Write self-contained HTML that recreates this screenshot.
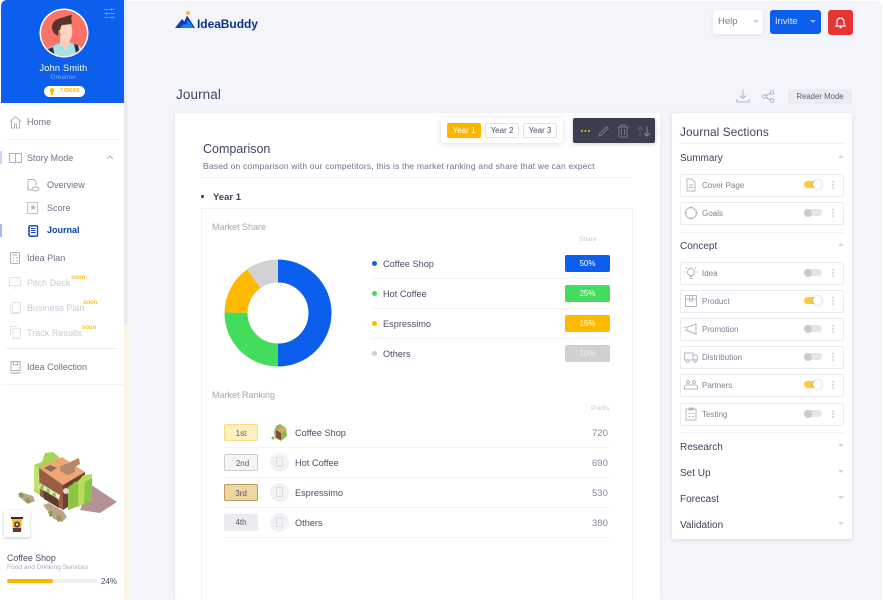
<!DOCTYPE html>
<html><head><meta charset="utf-8"><style>
html,body{margin:0;padding:0}
body{width:883px;height:600px;position:relative;overflow:hidden;background:#fff;font-family:"Liberation Sans",sans-serif;color:#3d4260}
.a{position:absolute}
.t{position:absolute;white-space:nowrap;line-height:1}
.nav{font-size:9px;color:#6c7189;letter-spacing:.03px}
.soon{font-size:6px;color:#ffc21a;font-weight:bold}
.dim{color:#c9ccd6}
.item{position:absolute;left:680px;width:162px;height:21px;border:1px solid #ebecf0;border-radius:2px;background:#fff}
.item span{position:absolute;left:21px;top:7px;font-size:8px;line-height:1;color:#7d8196;white-space:nowrap}
.tog{position:absolute;left:123px;top:6px;width:18px;height:7px;border-radius:4px;background:#e5e6ea}
.tog i{position:absolute;left:0;top:-.5px;width:8px;height:8px;border-radius:50%;background:#cbcbcb}
.tog.on{background:#ffc83d}
.tog.on i{left:9px;top:-1px;width:9px;height:9px;background:#fff;box-shadow:0 0 2px rgba(0,0,0,.3)}
.dots{position:absolute;left:151px;top:6px;width:2px;height:2px;background:#d0d2d9;border-radius:50%;box-shadow:0 3px 0 #d0d2d9,0 6px 0 #d0d2d9}
.ic{position:absolute;left:3px;top:3px}
.h{font-size:10px;color:#3d4260}
.hr{position:absolute;background:#eef0f4;height:1px}
.yr{position:absolute;top:123px;width:32px;height:13px;border:1px solid #e3e4e9;border-radius:2px;font-size:8px;line-height:13px;text-align:center;color:#4a4e66}
.bar{position:absolute;left:565px;width:45px;height:17px;border-radius:2px;color:#fff;font-size:8px;line-height:17px;text-align:center}
.dot{position:absolute;left:372px;width:5px;height:5px;border-radius:50%}
.rank{position:absolute;left:224px;width:32px;height:15px;border-radius:2px;font-size:8px;line-height:17px;text-align:center;color:#555a70;box-sizing:content-box}
.ph{position:absolute;left:270px;width:19px;height:19px;border-radius:50%;background:#f1f2f4}
.ph i{position:absolute;left:6px;top:4px;width:7px;height:10px;border:1px solid #dcdde2;box-sizing:border-box}
.row{font-size:9.200px;color:#4a4e68}
.pts{font-size:9.500px;color:#85889a}
</style></head><body>

<!-- main background -->
<div class="a" style="left:124px;top:1px;width:758px;height:599px;background:#f4f5fb;border-top-right-radius:6px"></div>
<div class="a" style="left:124px;top:325px;width:5px;height:275px;background:#fdf6e6"></div>
<div class="a" style="left:124px;top:0;width:3px;height:325px;background:#e9eaf0"></div>

<!-- sidebar -->
<div class="a" style="left:1px;top:0;width:123px;height:103px;background:#0b5fec;border-top-left-radius:6px"></div>
<div class="a" style="left:0;top:103px;width:124px;height:497px;background:#fff"></div>

<svg class="a" style="left:103px;top:8px" width="13" height="12" viewBox="0 0 13 12"><g stroke="#5e93f2" stroke-width="1" fill="none"><path d="M1 1.500h11M1 5.500h11M1 9.500h11"/><path d="M8.500 0v3M3.500 4v3M9 8v3"/></g></svg>

<!-- avatar -->
<svg class="a" style="left:39px;top:8px" width="50" height="50" viewBox="0 0 50 50">
<defs><clipPath id="cp"><circle cx="25" cy="25" r="23"/></clipPath></defs>
<circle cx="25" cy="25" r="24.500" fill="#fff"/><circle cx="25" cy="25" r="23" fill="#fa7268"/>
<g clip-path="url(#cp)">
<path d="M6 50l3-10 12-5h11l9 3 4 12z" fill="#a6e0ec"/>
<path d="M8 50l1-9 5-2 2 11zM35 36l4 1 3 13h-4z" fill="#2d3138"/>
<path d="M21 28v8l5 6 5-6v-6z" fill="#f7cdbb"/>
<path d="M20 18l12-2 1.500 8-1.500 7-5 2-4-3-2-6z" fill="#fbd6c4"/>
<path d="M13 19c0-5 4-8 9-9 4-1 8-3 11-3l-1 4c1 1 1 3 .5 5l-10 1-1.500 5-1.500 0-.5 6-3-2c-2-2-3-4-3-7z" fill="#57362a"/>
</g></svg>
<div class="t" style="left:0;width:127px;text-align:center;top:64px;font-size:9.200px;color:#fff;letter-spacing:.2px">John Smith</div>
<div class="t" style="left:0;width:127px;text-align:center;top:75px;font-size:6.500px;color:#7da9f5">Dreamer</div>
<div class="a" style="left:44px;top:86px;width:41px;height:10.500px;background:#fff;border-radius:6px"></div>
<div class="a" style="left:50px;top:88px;width:4px;height:5px;background:#ffbb00;border-radius:2px"></div>
<div class="a" style="left:51px;top:93px;width:2px;height:2px;background:#ffbb00"></div>
<div class="t" style="left:60px;top:88.500px;font-size:5px;font-weight:bold;color:#ffb400">7 IDEAS</div>

<!-- nav -->
<svg class="a" style="left:9px;top:115px" width="13" height="14" viewBox="0 0 13 14"><path d="M1 6.500L6.500 1.500 12 6.500M2.500 5.500V13h3V9h2v4h3V5.500" fill="none" stroke="#aeb2c0" stroke-width="1"/></svg>
<div class="t nav" style="left:27px;top:118px">Home</div>
<div class="hr" style="left:6px;top:139px;width:112px"></div>
<div class="a" style="left:0;top:151px;width:1.500px;height:13px;background:#c4d6f6"></div>
<svg class="a" style="left:9px;top:153px" width="13" height="11" viewBox="0 0 13 11"><path d="M.5.500h5.500l.5.500.5-.500h5.500v9H7l-.5.500-.5-.500H.5zM6.500 1v9" fill="none" stroke="#aeb2c0"/></svg>
<div class="t nav" style="left:27px;top:154px">Story Mode</div>
<svg class="a" style="left:106px;top:155px" width="8" height="5" viewBox="0 0 8 5"><path d="M1 4l3-3 3 3" fill="none" stroke="#b0b4c2"/></svg>
<svg class="a" style="left:27px;top:179px" width="13" height="13" viewBox="0 0 13 13"><path d="M1 .5h6l2 2v4M5 11H1V.500" fill="none" stroke="#aeb2c0"/><ellipse cx="8.500" cy="10" rx="3.500" ry="2" fill="none" stroke="#aeb2c0"/></svg>
<div class="t nav" style="left:47px;top:181px">Overview</div>
<div class="a" style="left:27px;top:202px;width:9px;height:10px;border:1px solid #c3c6d0;background:#fafafb"></div>
<div class="t" style="left:29.500px;top:203.500px;font-size:8px;color:#aeb2c0">★</div>
<div class="t nav" style="left:47px;top:204px">Score</div>
<div class="a" style="left:0;top:224px;width:1.500px;height:13px;background:#9dbcf3"></div>
<svg class="a" style="left:27px;top:225px" width="12" height="12" viewBox="0 0 12 12"><rect x="2" y=".8" width="8.500" height="10.400" rx="1" fill="none" stroke="#0e3fb0" stroke-width="1.300"/><path d="M4 3.500h4.500M4 5.500h4.500M4 7.500h4.500M1 3h2M1 6h2M1 9h2" stroke="#0e3fb0"/></svg>
<div class="t nav" style="left:47px;top:226px;color:#0d3fb0;font-weight:bold;letter-spacing:0">Journal</div>
<svg class="a" style="left:10px;top:252px" width="11" height="13" viewBox="0 0 11 13"><rect x=".5" y=".5" width="9" height="11" rx="1" fill="none" stroke="#aeb2c0"/><path d="M2.500 3h5M2.500 6h2M6 6h2M2.500 9h2M6 9h2" stroke="#aeb2c0"/></svg>
<div class="t nav" style="left:27px;top:254px">Idea Plan</div>
<svg class="a" style="left:9px;top:277px" width="13" height="12" viewBox="0 0 13 12"><path d="M.5.500h11v8h-11zM6 9v3" fill="none" stroke="#e2e3e8"/></svg>
<div class="t nav dim" style="left:27px;top:279px">Pitch Deck</div>
<div class="t soon" style="left:71px;top:275px">soon</div>
<svg class="a" style="left:10px;top:302px" width="11" height="12" viewBox="0 0 11 12"><path d="M2.500.5h8v10h-8zM.5 2v9.500h8" fill="none" stroke="#e2e3e8"/></svg>
<div class="t nav dim" style="left:27px;top:304px">Business Plan</div>
<div class="t soon" style="left:83px;top:300px">soon</div>
<svg class="a" style="left:10px;top:326px" width="11" height="13" viewBox="0 0 11 13"><path d="M.5 9V.500h7M3 12.500v-10h7.500v10z" fill="none" stroke="#e2e3e8"/></svg>
<div class="t nav dim" style="left:27px;top:329px">Track Results</div>
<div class="t soon" style="left:82px;top:325px">soon</div>
<div class="hr" style="left:6px;top:348px;width:112px;background:#e8eef8"></div>
<svg class="a" style="left:10px;top:361px" width="11" height="13" viewBox="0 0 11 13"><path d="M1 .5h9v9H1zM3.500.500v3.500h4V.500" fill="none" stroke="#aeb2c0"/><path d="M.5 12h10" stroke="#aeb2c0" stroke-width="1.200"/></svg>
<div class="t nav" style="left:27px;top:363px">Idea Collection</div>
<div class="a" style="left:2px;top:384px;width:122px;height:1px;background:#f3f4f7"></div>

<!-- illustration -->
<svg class="a" style="left:15px;top:450px" width="105" height="75" viewBox="15 450 105 75">
<path d="M90 484l27 18-17 11-20-3z" fill="#b39293"/>
<path d="M34 465l8-3 3-9 8-1 6 5v30l-19 8-6-4z" fill="#a9d453"/>
<path d="M34 465l6 4v24l-6-4z" fill="#c3e26e"/>
<path d="M39 468l23-11 23 15-22 13z" fill="#eda774"/>
<path d="M39 468l24 17v25l-23-14z" fill="#9c5b45"/>
<path d="M63 485l22-13v24l-22 14z" fill="#6d4034"/>
<path d="M40 483l20 12-1 5-20-12z" fill="#e6f0c8"/>
<path d="M41 484l3 2-1 5-3-2zM47 488l3 2-1 5-3-2zM53 492l3 2-1 5-3-2z" fill="#8cc447"/>
<path d="M43 490l15 9 1 9-15-9z" fill="#5f3a2d"/>
<path d="M68 487l5-3 1-2 6-1 2-5 10-2v27l-24 9z" fill="#8cc447"/>
<path d="M78 481l6-6 8-1v4l-7 4-1 22-6 3z" fill="#b6dc5c"/>
<path d="M60 466l9-3 3-2 7-3 1 6-5 3v5l-7 3-8-4z" fill="#b7876a"/>
<path d="M44 468l6-3 7 3-6 4z" fill="#8d6a59"/>
<circle cx="66" cy="491" r="3" fill="#e9d8c6"/>
<path d="M43 505l6-2 14 8 4 6-5 5-8-3zM18 496l5-3 10 3 2 5-7 3-5-4z" fill="#b9a58a"/>
<path d="M18 494l4-2 2 4-3 2zM25 499l4-1 1 4-4 1zM48 512l4-1 1 5-3 1zM56 516l4-1 2 5-4 2z" fill="#8d9b4f"/>
</svg>
<div class="a" style="left:4px;top:511px;width:26px;height:26px;background:#fff;border-radius:2px;box-shadow:0 1px 3px rgba(0,0,0,.22)"></div>
<svg class="a" style="left:10px;top:515px" width="14" height="18" viewBox="0 0 14 18"><path d="M1 2h12v2H1z" fill="#3b2b26"/><path d="M2 4h10l-1 13H3z" fill="#fdbb1e"/><path d="M2.700 13h8.600l-.3 4H3z" fill="#5c3a2c"/><circle cx="7" cy="9.500" r="3" fill="#5c3a2c"/><circle cx="7" cy="9.500" r="1.200" fill="#fff"/></svg>
<div class="t" style="left:7px;top:554px;font-size:8.800px;color:#4a4e68">Coffee Shop</div>
<div class="t" style="left:7px;top:565px;font-size:6.600px;color:#a8abb8">Food and Drinking Services</div>
<div class="a" style="left:7px;top:579px;width:90px;height:3.500px;background:#f0f0f2;border-radius:2px"></div>
<div class="a" style="left:7px;top:579px;width:46px;height:3.500px;background:#ffb500;border-radius:2px"></div>
<div class="t" style="left:101px;top:577.500px;font-size:8px;color:#4a4e68">24%</div>

<!-- logo -->
<svg class="a" style="left:174px;top:10px" width="22" height="19" viewBox="0 0 22 19"><circle cx="14" cy="3" r="1.800" fill="#ffb400"/><path d="M1 18L8 9l2.500 2.500L13 5.500l3 4.500 5 8z" fill="#0a3fb8"/><path d="M6 18l4-4 2 1 1.500-5 3 3 3 5z" fill="#1580f0"/></svg>
<div class="t" style="left:197px;top:18px;font-size:12px;font-weight:bold;color:#0d2f8c;letter-spacing:-.05px">IdeaBuddy</div>

<!-- top buttons -->
<div class="a" style="left:713px;top:10px;width:50px;height:24px;background:#fff;border-radius:3px;box-shadow:0 1px 4px rgba(40,50,90,.1)"></div>
<div class="t" style="left:718px;top:16.500px;font-size:9.500px;color:#777b90">Help</div>
<div class="a" style="left:752.500px;top:20px;border:3px solid transparent;border-top:3px solid #c5d0e8;border-bottom:0"></div>
<div class="a" style="left:770px;top:10px;width:51px;height:24px;background:#0b5fec;border-radius:3px"></div>
<div class="t" style="left:775px;top:16.500px;font-size:9.500px;color:#dbe6fb">Invite</div>
<div class="a" style="left:809.500px;top:20px;border:3px solid transparent;border-top:3px solid #8fb4f5;border-bottom:0"></div>
<div class="a" style="left:828px;top:10px;width:25px;height:25px;background:#e63535;border-radius:3px"></div>
<svg class="a" style="left:835px;top:16px" width="11" height="13" viewBox="0 0 11 13"><path d="M2 9V5.500a3.500 3.500 0 0 1 7 0V9l1 1H1z" fill="none" stroke="#fff" stroke-width="1.200"/><path d="M4.500 11.500h2" stroke="#fff" stroke-width="1.400"/></svg>

<!-- page title row -->
<div class="t" style="left:176px;top:87.500px;font-size:13.500px;color:#3f4460;letter-spacing:.1px">Journal</div>
<svg class="a" style="left:736px;top:89px" width="14" height="14" viewBox="0 0 14 14"><path d="M7 1v8M4 6.500L7 9.500 10 6.500M1 10v3h12v-3" fill="none" stroke="#b0b4c2"/></svg>
<svg class="a" style="left:762px;top:90px" width="13" height="13" viewBox="0 0 13 13"><g fill="none" stroke="#b0b4c2"><circle cx="10" cy="2.500" r="1.800"/><circle cx="10" cy="10.500" r="1.800"/><circle cx="2.500" cy="6.500" r="1.800"/><path d="M4 5.500l4.500-2.300M4 7.500l4.500 2.300"/></g></svg>
<div class="a" style="left:788px;top:89px;width:64px;height:15px;background:#ebecf1;border-radius:2px;font-size:7.800px;line-height:16px;text-align:center;color:#5a5e75">Reader Mode</div>

<!-- main card -->
<div class="a" style="left:175px;top:113px;width:485px;height:487px;background:#fff;border-radius:2px;box-shadow:0 1px 4px rgba(40,50,90,.1)"></div>
<!-- year switch -->
<div class="a" style="left:441px;top:118px;width:122px;height:25px;background:#fff;border-radius:2px;box-shadow:0 1px 6px rgba(40,50,90,.16)"></div>
<div class="yr" style="left:447px;background:#ffb500;border-color:#ffb500;color:#fff">Year 1</div>
<div class="yr" style="left:485px">Year 2</div>
<div class="yr" style="left:523px">Year 3</div>
<div class="a" style="left:573px;top:118px;width:82px;height:25px;background:#3b3e4d;border-radius:2px;box-shadow:0 1px 5px rgba(40,50,90,.25)"></div>
<div class="a" style="left:581px;top:130px;width:2px;height:2px;background:#ffc400;border-radius:50%;box-shadow:3.500px 0 0 #ffc400,7px 0 0 #ffc400"></div>
<svg class="a" style="left:598px;top:125px" width="12" height="12" viewBox="0 0 12 12"><path d="M1 11l.8-2.500L8.500 1.800l1.700 1.700L3.500 10.200z" fill="none" stroke="#767987"/></svg>
<svg class="a" style="left:617px;top:124px" width="12" height="14" viewBox="0 0 12 14"><path d="M.5 3h11M4 3V1h4v2M2 3v10h8V3M4.500 5v6M7.500 5v6" fill="none" stroke="#767987"/></svg>
<svg class="a" style="left:636px;top:126px" width="15" height="11" viewBox="0 0 15 11"><path d="M4 10.500V1M1 4l3-3 3 3" fill="none" stroke="#5c5f6c"/><path d="M11 .5V10M8 7l3 3 3-3" fill="none" stroke="#8a8d99"/></svg>

<div class="t" style="left:203px;top:143px;font-size:12.500px;color:#3f4460">Comparison</div>
<div class="t" style="left:203px;top:162px;font-size:8.500px;color:#6c7189;letter-spacing:.19px">Based on comparison with our competitors, this is the market ranking and share that we can expect</div>
<div class="hr" style="left:201px;top:177px;width:431px"></div>
<div class="a" style="left:201px;top:195px;width:2.500px;height:2.500px;background:#3d4260;border-radius:50%"></div>
<div class="t" style="left:213px;top:192.500px;font-size:9.500px;font-weight:bold;color:#3d4260">Year 1</div>

<div class="a" style="left:201px;top:208px;width:432px;height:392px;border:1px solid #f2f3f5;border-bottom:0;box-sizing:border-box"></div>
<div class="t" style="left:212px;top:222.500px;font-size:9px;color:#a5a8b6">Market Share</div>
<div class="t" style="left:579px;top:237px;font-size:6.500px;color:#c6c8d1">Share</div>

<svg class="a" style="left:223.500px;top:258.500px" width="108" height="108" viewBox="0 0 108 108">
<g fill="none" stroke-width="23" transform="rotate(-90 54 54)">
<circle cx="54" cy="54" r="42" stroke="#0b5fec" stroke-dasharray="132 264" stroke-dashoffset="0"/>
<circle cx="54" cy="54" r="42" stroke="#43dc5c" stroke-dasharray="66 264" stroke-dashoffset="-132"/>
<circle cx="54" cy="54" r="42" stroke="#ffb900" stroke-dasharray="39.600 264" stroke-dashoffset="-198"/>
<circle cx="54" cy="54" r="42" stroke="#d2d2d2" stroke-dasharray="26.400 264" stroke-dashoffset="-237.600"/>
</g></svg>

<div class="dot" style="top:261px;background:#0b5fec"></div>
<div class="t row" style="left:383px;top:259.500px">Coffee Shop</div>
<div class="bar" style="top:255px;background:#0b5fec">50%</div>
<div class="hr" style="left:371px;top:278px;width:239px;background:#f1f2f5"></div>
<div class="dot" style="top:291px;background:#43dc5c"></div>
<div class="t row" style="left:383px;top:289.500px">Hot Coffee</div>
<div class="bar" style="top:285px;background:#43dc5c">25%</div>
<div class="hr" style="left:371px;top:308px;width:239px;background:#f1f2f5"></div>
<div class="dot" style="top:321px;background:#ffb400"></div>
<div class="t row" style="left:383px;top:319.500px">Espressimo</div>
<div class="bar" style="top:315px;background:#ffb900">15%</div>
<div class="hr" style="left:371px;top:338px;width:239px;background:#f1f2f5"></div>
<div class="dot" style="top:351px;background:#cfcfd2"></div>
<div class="t row" style="left:383px;top:349.500px">Others</div>
<div class="bar" style="top:345px;background:#d0d0d0;color:#eee">10%</div>

<div class="t" style="left:212px;top:391px;font-size:9px;color:#a5a8b6">Market Ranking</div>
<div class="t" style="left:591px;top:405.500px;font-size:6.500px;color:#c6c8d1">Points</div>

<div class="rank" style="top:424px;background:#fdf0c2;border:1px solid #fbdc80">1st</div>
<svg class="a" style="left:270px;top:423px" width="19" height="19" viewBox="0 0 19 19"><path d="M6 3l4-2 6 4 1 8-6 5-6-3-1-6z" fill="#92b94a"/><path d="M6 7l5 3v7l-5-3z" fill="#7c4b39"/><path d="M11 10l5-3-1-2-4-1-4 3z" fill="#e2a06c"/><circle cx="3" cy="15" r="1.500" fill="#a8a17a"/></svg>
<div class="t row" style="left:295px;top:429px">Coffee Shop</div>
<div class="t pts" style="left:592px;top:429px">720</div>
<div class="hr" style="left:224px;top:447px;width:386px;background:#f3f4f6"></div>

<div class="rank" style="top:454px;background:#f5f5f6;border:1px solid #cdced3;text-indent:3px">2nd</div>
<div class="ph" style="top:453px"><i></i></div>
<div class="t row" style="left:295px;top:459px">Hot Coffee</div>
<div class="t pts" style="left:592px;top:459px">690</div>
<div class="hr" style="left:224px;top:477px;width:386px;background:#f3f4f6"></div>

<div class="rank" style="top:484px;background:#eed6a2;border:1px solid #bb9a68">3rd</div>
<div class="ph" style="top:483px"><i></i></div>
<div class="t row" style="left:295px;top:489px">Espressimo</div>
<div class="t pts" style="left:592px;top:489px">530</div>
<div class="hr" style="left:224px;top:507px;width:386px;background:#f3f4f6"></div>

<div class="rank" style="top:514px;background:#ebecf0;width:34px;height:17px;line-height:18px">4th</div>
<div class="ph" style="top:513px"><i></i></div>
<div class="t row" style="left:295px;top:519px">Others</div>
<div class="t pts" style="left:592px;top:519px">380</div>
<div class="hr" style="left:224px;top:537px;width:386px;background:#f3f4f6"></div>

<!-- right panel -->
<div class="a" style="left:672px;top:113px;width:180px;height:426px;background:#fff;border-radius:2px;box-shadow:0 1px 4px rgba(40,50,90,.14)"></div>
<div class="t" style="left:680px;top:126.500px;font-size:11.800px;color:#3f4460;letter-spacing:.1px">Journal Sections</div>
<div class="hr" style="left:680px;top:143px;width:164px"></div>
<div class="t h" style="left:680px;top:153.500px">Summary</div>
<div class="a" style="left:838px;top:155px;border:3px solid transparent;border-bottom:3px solid #d4d5db;border-top:0"></div>

<div class="item" style="top:174px"><svg class="ic" width="14" height="14" viewBox="0 0 14 14"><path d="M3 1h5l3 3v9H3zM5 7h4M5 9.500h4" fill="none" stroke="#b5b8c4"/></svg><span>Cover Page</span><div class="tog on"><i></i></div><div class="dots"></div></div>
<div class="item" style="top:202px"><svg class="ic" width="14" height="14" viewBox="0 0 14 14"><circle cx="7" cy="7" r="5.500" fill="none" stroke="#b5b8c4"/><path d="M7 0v3M7 11v3M0 7h3M11 7h3" stroke="#b5b8c4"/></svg><span>Goals</span><div class="tog"><i></i></div><div class="dots"></div></div>
<div class="hr" style="left:680px;top:232px;width:164px;background:#f3f4f6"></div>
<div class="t h" style="left:680px;top:241.500px">Concept</div>
<div class="a" style="left:838px;top:243px;border:3px solid transparent;border-bottom:3px solid #d4d5db;border-top:0"></div>

<div class="item" style="top:262px"><svg class="ic" width="14" height="14" viewBox="0 0 14 14"><circle cx="7" cy="6" r="3.500" fill="none" stroke="#b5b8c4"/><path d="M5.500 10.500h3M5.500 12.500h3M7 0v1M0 6h1.500M12.500 6H14M2 1.500l1 1M12 1.500l-1 1" stroke="#b5b8c4"/></svg><span>Idea</span><div class="tog"><i></i></div><div class="dots"></div></div>
<div class="item" style="top:290px"><svg class="ic" width="14" height="14" viewBox="0 0 14 14"><path d="M1.500 1.500h11v11h-11zM1.500 5h11M5.500 1.500V7h3V1.500" fill="none" stroke="#b5b8c4"/></svg><span>Product</span><div class="tog on"><i></i></div><div class="dots"></div></div>
<div class="item" style="top:318px"><svg class="ic" width="14" height="14" viewBox="0 0 14 14"><path d="M12 2v10L4 9H3V5h1zM0 5.500h1.500M0 8.500h1.500" fill="none" stroke="#b5b8c4"/></svg><span>Promotion</span><div class="tog"><i></i></div><div class="dots"></div></div>
<div class="item" style="top:346px"><svg class="ic" width="14" height="14" viewBox="0 0 14 14"><path d="M.5 3h8.500v7H.5zM9 5h3l1.500 2.500V10H9" fill="none" stroke="#b5b8c4"/><circle cx="3.500" cy="11" r="1.300" fill="#fff" stroke="#b5b8c4"/><circle cx="11" cy="11" r="1.300" fill="#fff" stroke="#b5b8c4"/></svg><span>Distribution</span><div class="tog"><i></i></div><div class="dots"></div></div>
<div class="item" style="top:374px"><svg class="ic" width="14" height="14" viewBox="0 0 14 14"><circle cx="4" cy="4" r="1.500" fill="none" stroke="#b5b8c4"/><circle cx="10" cy="4" r="1.500" fill="none" stroke="#b5b8c4"/><path d="M.5 11V8.500l2-1.500h9l2 1.500V11z" fill="none" stroke="#b5b8c4"/></svg><span>Partners</span><div class="tog on"><i></i></div><div class="dots"></div></div>
<div class="item" style="top:403px"><svg class="ic" width="14" height="14" viewBox="0 0 14 14"><path d="M2 2h10v11H2zM5 1h4v2H5zM4.500 6.500h2M8 6.500h2M4.500 9.500h2M8 9.500h2" fill="none" stroke="#b5b8c4"/></svg><span>Testing</span><div class="tog"><i></i></div><div class="dots"></div></div>
<div class="hr" style="left:680px;top:432px;width:164px;background:#f3f4f6"></div>

<div class="t h" style="left:680px;top:442.500px">Research</div>
<div class="a" style="left:838px;top:444px;border:3px solid transparent;border-top:3px solid #d4d5db;border-bottom:0"></div>
<div class="t h" style="left:680px;top:468.500px">Set Up</div>
<div class="a" style="left:838px;top:470px;border:3px solid transparent;border-top:3px solid #d4d5db;border-bottom:0"></div>
<div class="t h" style="left:680px;top:494.500px">Forecast</div>
<div class="a" style="left:838px;top:496px;border:3px solid transparent;border-top:3px solid #d4d5db;border-bottom:0"></div>
<div class="t h" style="left:680px;top:520.500px">Validation</div>
<div class="a" style="left:838px;top:522px;border:3px solid transparent;border-top:3px solid #d4d5db;border-bottom:0"></div>

</body></html>
